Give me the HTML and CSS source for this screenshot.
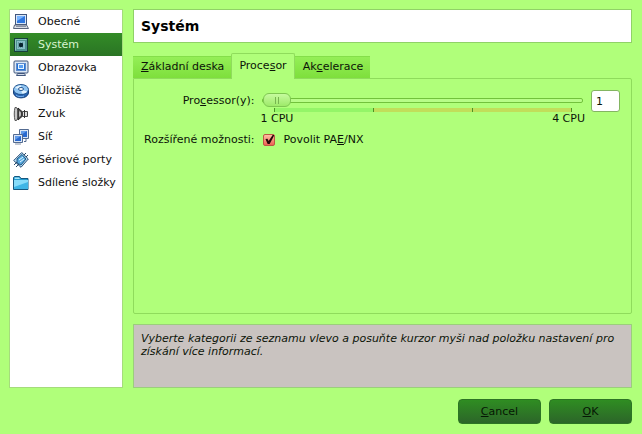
FILE: index.html
```html
<!DOCTYPE html>
<html lang="cs">
<head>
<meta charset="utf-8">
<title>Systém</title>
<link rel="stylesheet" href="styles.css">
</head>
<body>
<form class="dialog">
  <div class="content">
    <nav class="sidebar">
      <a href="#obecne" class="item">
        <svg class="icon" viewBox="0 0 16 16"><rect x="2.500" y=".500" width="11" height="10" fill="#d9e6f7" stroke="#40567d"/><rect x="4" y="2" width="8" height="7" fill="#2f77df"/><path d="M4 2h8L4 7z" fill="#78b4ff"/><path d="M1.500 11h12l2 3.500H.500z" fill="#dcdfe6" stroke="#59647a"/><path d="M3 12.500h10" stroke="#8b94a5"/></svg>
        Obecné</a>
      <a href="#system" class="item selected" aria-current="page">
        <svg class="icon" viewBox="0 0 16 16"><rect x="1.500" y="1.500" width="13" height="13" fill="#4f9490" stroke="#16403c"/><path d="M2.500 13.500v-11h11" fill="none" stroke="#8cc4bc"/><rect x="4" y="4" width="8" height="8" fill="#86bfc6"/><path d="M5 6h6M5 8h6M5 10h6" stroke="#3f7b82" stroke-dasharray="1 1"/><rect x="6" y="6" width="4" height="4" rx="1" fill="#06222c"/></svg>
        Systém</a>
      <a href="#obrazovka" class="item">
        <svg class="icon" viewBox="0 0 16 16"><rect x="1" y="1" width="14" height="12" rx="1" fill="#dce8f6" stroke="#40567d"/><rect x="3.500" y="3.500" width="9" height="7" fill="#2673d5" stroke="#5f8ccc"/><rect x="5.500" y="4.500" width="5" height="4" fill="#5ba0f2" stroke="#e6f3ff"/><path d="M4.500 13.500h7l1 2h-9z" fill="#cfd8e6" stroke="#40567d"/></svg>
        Obrazovka</a>
      <a href="#uloziste" class="item">
        <svg class="icon" viewBox="0 0 16 16"><path d="M.500 7v3c1 6.500 14 6.500 15 0V7z" fill="#2865b4" stroke="#163f7a"/><ellipse cx="8" cy="6.500" rx="7.500" ry="5" fill="#91c6f3" stroke="#24558f"/><path d="M8 6.500 2 5c2-2 4-2.500 6-2.500zM8 6.500l6 2c-1 2-3 2-5 2z" fill="#e2f3ff"/><ellipse cx="8" cy="6" rx="2.500" ry="1.500" fill="#fff" stroke="#24558f"/><path d="M3 12c2 2 6 2 8 1" fill="none" stroke="#79b3ef"/></svg>
        Úložiště</a>
      <a href="#zvuk" class="item">
        <svg class="icon" viewBox="0 0 16 16"><path d="M2 1.500h1.500L5 4v8l-1.500 2.500H2c-1-4-1-9 0-13z" fill="#c8c8c8" stroke="#555"/><path d="m5 2 4 3.500v5L5 14z" fill="#555" stroke="#222"/><path d="m6 5 2 1.500v3L6 11z" fill="#bbb"/><path d="M9.500 5.500h5v5h-5z" fill="#ddd" stroke="#444"/><path d="M11.500 4v8" stroke="#333"/></svg>
        Zvuk</a>
      <a href="#sit" class="item">
        <svg class="icon" viewBox="0 0 16 16"><path d="M6.500.500h9v9h-9z" fill="#dce7f6" stroke="#536b91"/><path d="M8 2h6v6H8z" fill="#2869d0"/><path d="M8 2h6L8 6z" fill="#629be9"/><path d="M13 10v2.500h-2" fill="none" stroke="#536b91"/><path d="M.500 5.500h9v8h-9z" fill="#dce7f6" stroke="#536b91"/><path d="M2 7h6v5H2z" fill="#2869d0"/><path d="M2 7h6l-6 4z" fill="#629be9"/><path d="M2 15h6" stroke="#8793a8"/></svg>
        Síť</a>
      <a href="#porty" class="item">
        <svg class="icon" viewBox="0 0 16 16"><path d="m.700 8.500 8-8L15.300 7 8 15.300z" fill="#b8ddf4" stroke="#294d75"/><path d="m4 7 5-4.500L13 7l-5 6-4-2z" fill="#56a9df" stroke="#205782"/><path d="m6 8 4-3M7 10l4-3" stroke="#e4f7ff"/><path d="m1 13 3-3M3 15l3-3M11 3l2-2M13 5l2-2" stroke="#284969"/></svg>
        Sériové porty</a>
      <a href="#slozky" class="item">
        <svg class="icon" viewBox="0 0 16 16"><path d="M.500 14.500v-12l1-1h5l1.500 2h7v11z" fill="#239bd0" stroke="#16577f"/><path d="M1 5h14v9H1z" fill="#3fb5e6"/><path d="M1 5h14v2L1 12z" fill="#87dcfa"/><path d="M2 2.500h4L7 4H1.500z" fill="#a5e5fa"/></svg>
        Sdílené složky</a>
    </nav>
    <main class="main">
      <h1 class="title">Systém</h1>
      <section class="tabbox">
        <div class="tabs" role="tablist">
          <button type="button" role="tab" class="tab" aria-selected="false"><span><u>Z</u>ákladní deska</span></button>
          <button type="button" role="tab" class="tab active" aria-selected="true"><span>Proce<u>s</u>or</span></button>
          <button type="button" role="tab" class="tab" aria-selected="false"><span>Ak<u>c</u>elerace</span></button>
        </div>
        <div class="panel" role="tabpanel">
          <label class="label" for="cpus">Pro<u>c</u>essor(y):</label>
          <div class="slider">
            <input class="range" id="cpus" type="range" min="1" max="4" value="1">
            <div class="scale"><i></i><i></i><i></i><i></i></div>
            <div class="limits"><span>1 CPU</span><span>4 CPU</span></div>
          </div>
          <input class="count" type="text" value="1" aria-label="Processor(y)">
          <span class="label">Rozšířené možnosti:</span>
          <label class="check"><input type="checkbox" checked><span>Povolit PA<u>E</u>/NX</span></label>
        </div>
      </section>
      <p class="info">Vyberte kategorii ze seznamu vlevo a posuňte kurzor myši nad položku nastavení pro získání více informací.</p>
    </main>
  </div>
  <footer class="actions">
    <button type="button" class="button"><span><u>C</u>ancel</span></button>
    <button type="submit" class="button"><span><u>O</u>K</span></button>
  </footer>
</form>
</body>
</html>
```
FILE: styles.css
```css
* { box-sizing: border-box; }

body {
  margin: 0;
  background: #b0ff7a;
  color: #0c1408;
  font: 11px/13px "DejaVu Sans", sans-serif;
}

button, input { font: inherit; color: inherit; margin: 0; }
u { text-underline-offset: 1px; }

.dialog {
  display: flex;
  flex-direction: column;
  gap: 11px;
  min-height: 100vh;
  padding: 9px 10px 10px 9px;
}

.content { display: flex; flex: 1; gap: 10px; }

.sidebar {
  flex: none;
  width: 114px;
  background: #fff;
  border: 1px solid #a5dc7c;
}

.item {
  display: flex;
  align-items: center;
  gap: 9px;
  height: 23px;
  padding-left: 3px;
  color: #111;
  text-decoration: none;
  white-space: nowrap;
}

.item.selected {
  background: linear-gradient(#338c27, #2a7424);
  color: #d9f5cf;
}

.icon { flex: none; width: 16px; height: 16px; }

.main { display: flex; flex: 1; flex-direction: column; gap: 10px; min-width: 0; }

.title {
  margin: 0;
  padding: 7px;
  background: #fff;
  border: 1px solid #90d267;
  color: #000;
  font-size: 14px;
  line-height: 18px;
}

.tabbox { display: flex; flex: 1; flex-direction: column; }

.tabs { display: flex; align-items: flex-end; }

.tab {
  height: 22px;
  padding: 0 7px 2px 8px;
  background: linear-gradient(#94ef57, #7edf3c);
  border: 0;
  border-top: 1px solid #84df4a;
  white-space: nowrap;
}

.tab.active {
  height: 26px;
  margin-bottom: -1px;
  padding: 0 7px 2px;
  background: #b0ff7a;
  border: 1px solid #8fdc5c;
  border-bottom: 0;
  border-radius: 2px 2px 0 0;
  position: relative;
}

.panel {
  display: grid;
  flex: 1;
  grid-template-columns: auto 1fr 29px;
  align-content: start;
  gap: 4px 8px;
  padding: 11px 11px 11px 10px;
  border: 1px solid #8fdc5c;
  border-radius: 0 2px 2px 2px;
}

.label { padding-top: 4px; text-align: right; white-space: nowrap; }
.label + .check { grid-column: 2 / 4; }

.range {
  display: block;
  width: 100%;
  height: 16px;
  margin-top: 2px;
  appearance: none;
  background: none;
}

.range::-webkit-slider-runnable-track {
  height: 5px;
  border: 1px solid #72c23c;
  border-radius: 2px;
  background: #b8fd88;
}

.range::-webkit-slider-thumb {
  appearance: none;
  width: 28px;
  height: 14px;
  margin-top: -6px;
  border: 1px solid #7fc752;
  border-radius: 6px;
  background:
    linear-gradient(#77b550, #77b550) 11px 3px / 1px 7px no-repeat,
    linear-gradient(#77b550, #77b550) 14px 3px / 1px 7px no-repeat,
    linear-gradient(#c6fb9e, #9eea6a);
}

.scale {
  display: flex;
  justify-content: space-between;
  height: 4px;
  margin: 0 11px 0 12px;
  background: linear-gradient(90deg, #94f568 33.3%, #c1de5a 33.3%);
}

.scale i { width: 1px; background: #4c9226; }

.limits { display: flex; justify-content: space-between; margin: 0 -2px; }

.count {
  width: 29px;
  height: 22px;
  padding: 0 4px;
  background: #fff;
  border: 1px solid #83b561;
  border-radius: 3px;
}

.check { display: flex; align-items: center; gap: 8px; padding-left: 1px; height: 21px; }

.check input {
  appearance: none;
  display: grid;
  width: 12px;
  height: 12px;
  border: 1px solid #bd5745;
  border-radius: 2px;
  background: linear-gradient(#ffc0a2, #ed6255);
}

.check input:checked::before {
  content: "";
  background: #250808;
  clip-path: polygon(10% 45%, 30% 42%, 42% 65%, 82% 5%, 100% 5%, 52% 95%, 32% 95%);
}

.info {
  min-height: 64px;
  margin: 0;
  padding: 7px;
  background: #c9c3c0;
  border: 1px solid #9bce7c;
  font-style: italic;
}

.actions { display: flex; justify-content: flex-end; gap: 8px; }

.button {
  width: 83px;
  height: 25px;
  padding: 0;
  border: 1px solid #2c7424;
  border-radius: 4px;
  background: linear-gradient(#2f8d22, #2c6529);
  color: #061704;
}
```
